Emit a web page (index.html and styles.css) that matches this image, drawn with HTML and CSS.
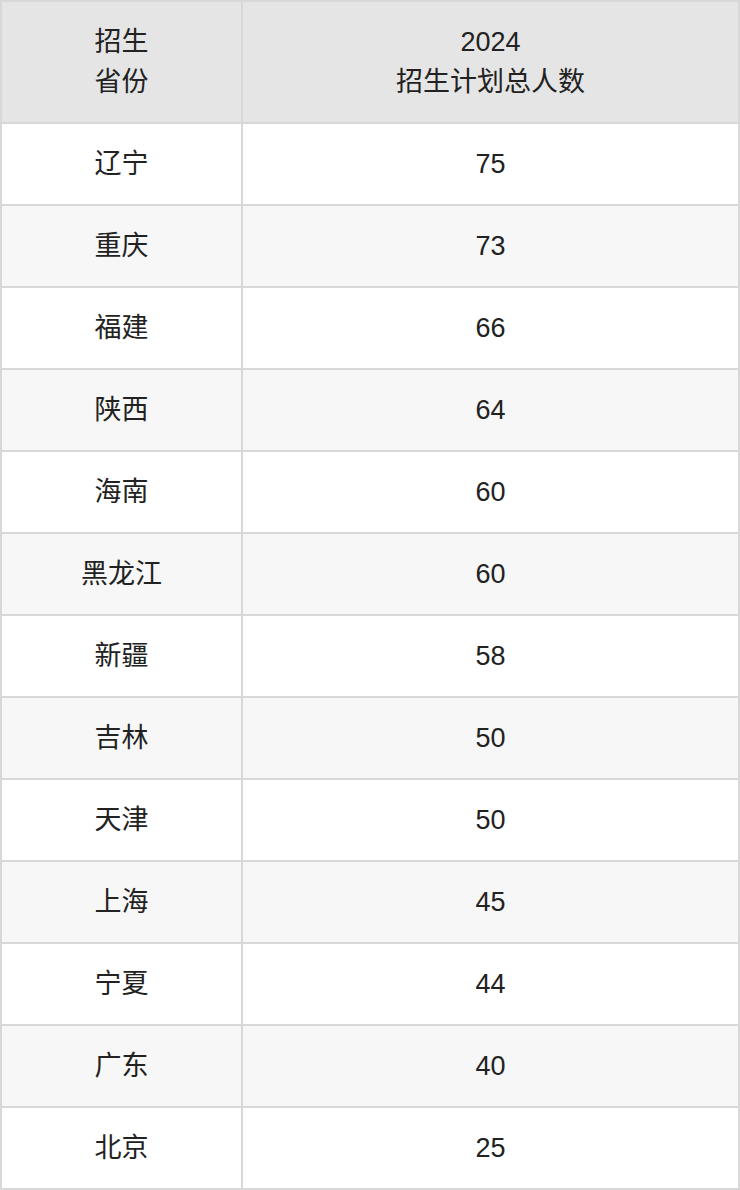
FILE: index.html
```html
<!DOCTYPE html>
<html lang="zh">
<head>
<meta charset="utf-8">
<link rel="stylesheet" href="styles.css">
</head>
<body>
<div class="table">
  <div class="cell head">招生<br>省份</div>
  <div class="cell head">2024<br>招生计划总人数</div>
  <div class="cell">辽宁</div><div class="cell">75</div>
  <div class="cell alt">重庆</div><div class="cell alt">73</div>
  <div class="cell">福建</div><div class="cell">66</div>
  <div class="cell alt">陕西</div><div class="cell alt">64</div>
  <div class="cell">海南</div><div class="cell">60</div>
  <div class="cell alt">黑龙江</div><div class="cell alt">60</div>
  <div class="cell">新疆</div><div class="cell">58</div>
  <div class="cell alt">吉林</div><div class="cell alt">50</div>
  <div class="cell">天津</div><div class="cell">50</div>
  <div class="cell alt">上海</div><div class="cell alt">45</div>
  <div class="cell">宁夏</div><div class="cell">44</div>
  <div class="cell alt">广东</div><div class="cell alt">40</div>
  <div class="cell">北京</div><div class="cell">25</div>
</div>
</body>
</html>
```
FILE: styles.css
```css
html, body {
  margin: 0;
  padding: 0;
  background: #ffffff;
}
.table {
  width: 740px;
  box-sizing: border-box;
  display: grid;
  grid-template-columns: 239px 1fr;
  grid-template-rows: 120px;
  grid-auto-rows: 80px;
  gap: 2px;
  padding: 2px;
  background: #d8d8d8;
  font-family: "Liberation Sans", "Noto Sans CJK SC", sans-serif;
  font-size: 27px;
  color: #222222;
}
.cell {
  background: #ffffff;
  display: flex;
  align-items: center;
  justify-content: center;
  text-align: center;
  line-height: 40px;
}
.cell.alt {
  background: #f7f7f7;
}
.cell.head {
  background: #e5e5e5;
}
```
